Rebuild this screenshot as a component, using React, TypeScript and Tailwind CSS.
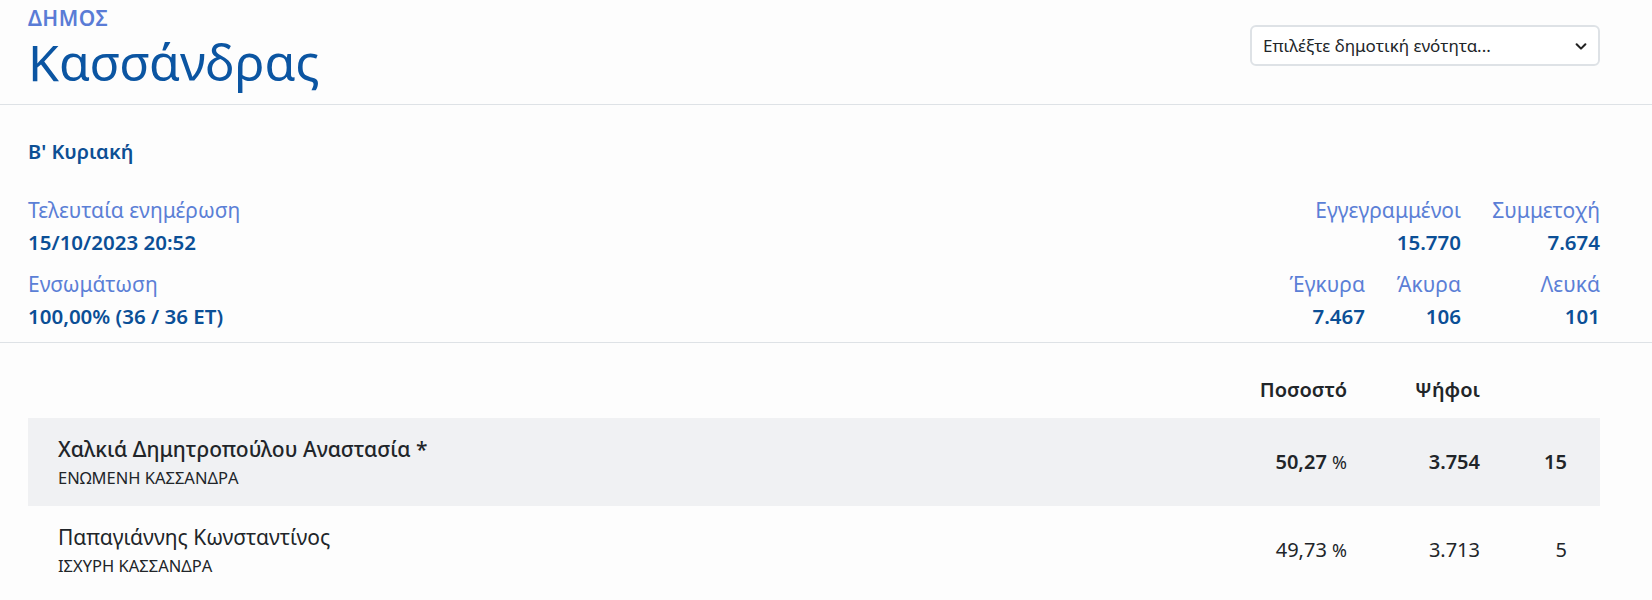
import React from 'react';

const FONT = { fontFamily: '"Noto Sans", "Open Sans", sans-serif' };

type Stat = { label: string; value: string; w: string };

const topStats: Stat[] = [
  { label: 'Εγγεγραμμένοι', value: '15.770', w: 'w-auto' },
  { label: 'Συμμετοχή', value: '7.674', w: 'w-[139px]' },
];

const bottomStats: Stat[] = [
  { label: 'Έγκυρα', value: '7.467', w: 'w-[96px]' },
  { label: 'Άκυρα', value: '106', w: 'w-[96px]' },
  { label: 'Λευκά', value: '101', w: 'w-[139px]' },
];

type Candidate = { name: string; party: string; pct: string; votes: string; seats: string; winner?: boolean };

const candidates: Candidate[] = [
  { name: 'Χαλκιά Δημητροπούλου Αναστασία *', party: 'ΕΝΩΜΕΝΗ ΚΑΣΣΑΝΔΡΑ', pct: '50,27', votes: '3.754', seats: '15', winner: true },
  { name: 'Παπαγιάννης Κωνσταντίνος', party: 'ΙΣΧΥΡΗ ΚΑΣΣΑΝΔΡΑ', pct: '49,73', votes: '3.713', seats: '5' },
];

const StatCell: React.FC<{ s: Stat }> = ({ s }) => (
  <div className={`${s.w} text-right`}>
    <div className="text-[21px] leading-[32px] text-[#5b7fd6]">{s.label}</div>
    <div className="text-[20.5px] leading-[32px] font-semibold text-[#0b4f96]">{s.value}</div>
  </div>
);

const App: React.FC = () => {
  return (
    <div className="min-h-screen bg-[#fdfdfd]" style={FONT}>
      <header className="h-[105px] border-b border-[#dee2e6] flex items-start justify-between pl-[28px] pr-[52px]">
        <div>
          <div className="pt-[5px] text-[21px] leading-[26px] font-semibold tracking-[0.5px] text-[#5a7cd6]">ΔΗΜΟΣ</div>
          <h1 className="text-[50px] leading-[50px] text-[#0b55a2] mt-[6px]">Κασσάνδρας</h1>
        </div>
        <div className="mt-[25px] w-[350px] h-[41px] rounded-[6px] border-2 border-[#dee2e6] bg-white flex items-center justify-between pl-[11px] pr-[10px]">
          <span className="text-[17px] text-[#212529]">Επιλέξτε δημοτική ενότητα...</span>
          <svg width="14" height="14" viewBox="0 0 16 16" fill="none" stroke="#222" strokeWidth="2.4" strokeLinecap="round" strokeLinejoin="round">
            <path d="M3 6l5 5 5-5" />
          </svg>
        </div>
      </header>

      <section className="h-[238px] border-b border-[#dee2e6] pl-[28px] pr-[52px] pt-[33px]">
        <div className="text-[20px] leading-[28px] font-semibold text-[#0d4f94]">Β' Κυριακή</div>
        <div className="mt-[28px] flex justify-between">
          <div className="flex flex-col gap-[10px]">
            <div>
              <div className="text-[21px] leading-[32px] text-[#5b7fd6]">Τελευταία ενημέρωση</div>
              <div className="text-[20.5px] leading-[32px] font-semibold text-[#0b4f96]">15/10/2023 20:52</div>
            </div>
            <div>
              <div className="text-[21px] leading-[32px] text-[#5b7fd6]">Ενσωμάτωση</div>
              <div className="text-[20.5px] leading-[32px] font-semibold text-[#0b4f96]">100,00% (36 / 36 ΕΤ)</div>
            </div>
          </div>
          <div className="flex flex-col gap-[10px]">
            <div className="flex justify-end">
              {topStats.map((s) => (
                <StatCell key={s.label} s={s} />
              ))}
            </div>
            <div className="flex justify-end">
              {bottomStats.map((s) => (
                <StatCell key={s.label} s={s} />
              ))}
            </div>
          </div>
        </div>
      </section>

      <section className="pl-[28px] pr-[52px] text-[#212529]">
        <div className="h-[75px] flex items-center pl-[30px] pr-[33px] pt-[18px] text-[20px] font-semibold">
          <div className="flex-1" />
          <div className="w-[120px] text-right">Ποσοστό</div>
          <div className="w-[133px] text-right">Ψήφοι</div>
          <div className="w-[87px]" />
        </div>
        {candidates.map((c) => (
          <div
            key={c.name}
            className={`h-[88px] flex items-center pl-[30px] pr-[33px] ${c.winner ? 'bg-[#f0f1f3] font-semibold' : ''}`}
          >
            <div className="flex-1">
              <div className={`text-[21px] leading-[28px] ${c.winner ? 'font-medium' : ''}`}>{c.name}</div>
              <div className="text-[16.5px] leading-[22px] font-normal mt-[4px]">{c.party}</div>
            </div>
            <div className="w-[120px] text-right text-[20px]">
              {c.pct} <span className="font-normal text-[18px]">%</span>
            </div>
            <div className="w-[133px] text-right text-[20px]">{c.votes}</div>
            <div className="w-[87px] text-right text-[20px]">{c.seats}</div>
          </div>
        ))}
      </section>
    </div>
  );
};

export default App;
